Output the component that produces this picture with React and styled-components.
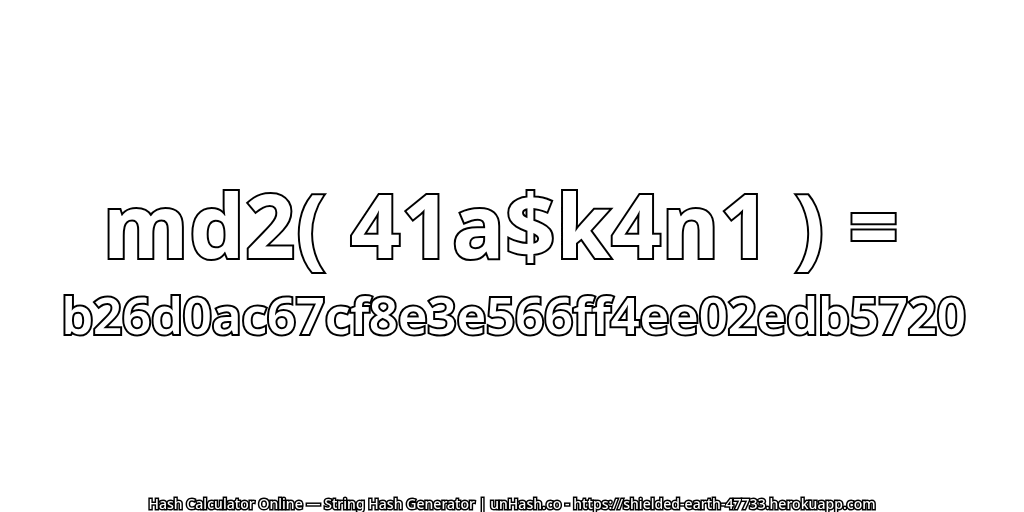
import React from 'react';
import styled, { createGlobalStyle } from 'styled-components';

const GlobalStyle = createGlobalStyle`
  html, body {
    margin: 0;
    padding: 0;
    background: #fff;
  }
`;

const Page = styled.div`
  width: 1024px;
  height: 512px;
  display: flex;
  flex-direction: column;
  align-items: center;
  font-family: "Noto Sans", "Open Sans", sans-serif;
  overflow: hidden;
  will-change: transform;
`;

const Heading = styled.div`
  margin-top: 164px;
  display: flex;
  flex-direction: column;
  align-items: center;
  color: #fff;
  white-space: nowrap;
`;

const Title = styled.div`
  padding-right: 21px;
  font-size: 87px;
  line-height: 120px;
  font-weight: 700;
  letter-spacing: 1.1px;
  -webkit-text-stroke: 4px #000;
  paint-order: stroke fill;
`;

const HashLine = styled.div`
  padding-left: 3px;
  font-size: 51px;
  line-height: 60px;
  font-weight: 600;
  letter-spacing: -0.2px;
  -webkit-text-stroke: 4px #000;
  paint-order: stroke fill;
`;

const Footer = styled.div`
  margin-top: auto;
  height: 16px;
  line-height: 16px;
  font-size: 14px;
  font-weight: 500;
  letter-spacing: 0.04px;
  color: #fff;
  white-space: nowrap;
  -webkit-text-stroke: 3px #000;
  paint-order: stroke fill;
`;

export default function App() {
  return (
    <Page>
      <GlobalStyle />
      <Heading>
        <Title>md2( 41a$k4n1 ) =</Title>
        <HashLine>b26d0ac67cf8e3e566ff4ee02edb5720</HashLine>
      </Heading>
      <Footer>Hash Calculator Online — String Hash Generator | unHash.co - https://shielded-earth-47733.herokuapp.com</Footer>
    </Page>
  );
}
